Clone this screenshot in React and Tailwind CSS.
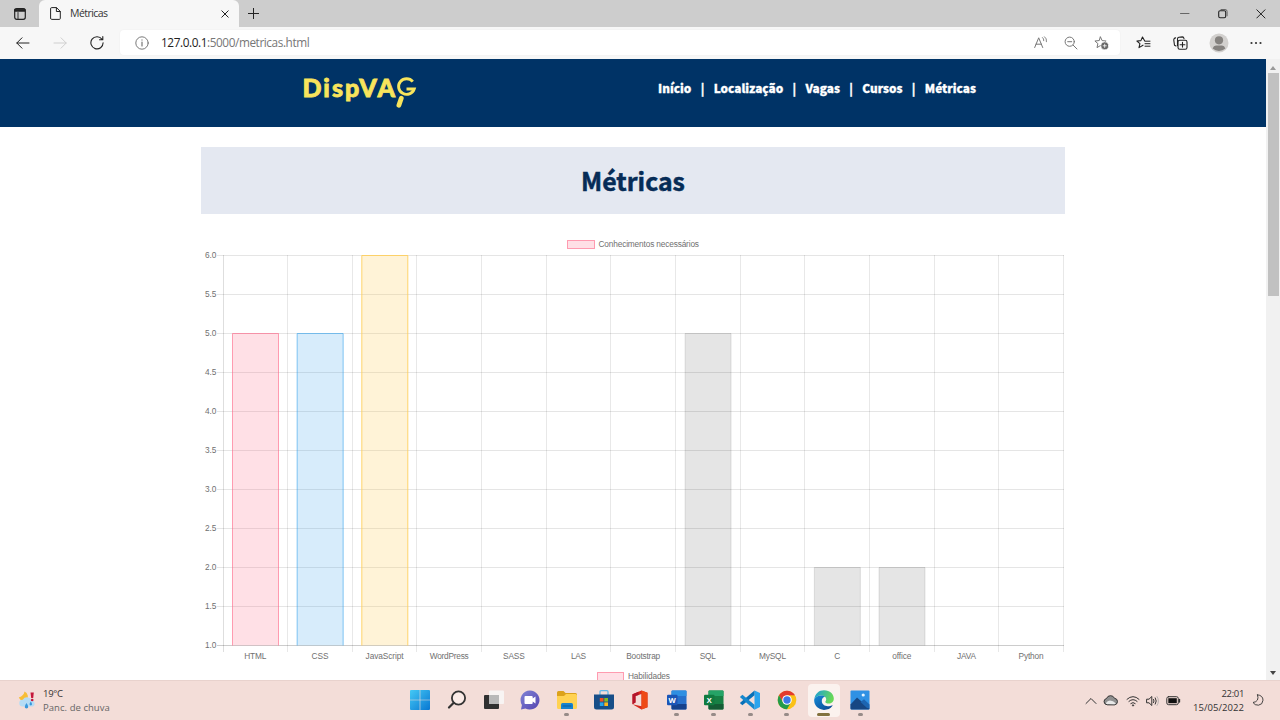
import React from 'react';

const UI = "font-['Open_Sans',sans-serif]";
const SOURCE = "font-['Noto_Sans_CJK_JP','Noto_Sans_CJK_SC',sans-serif]";

function Icon({ w = 16, h = 16, box, className = '', children }) {
  return (
    <svg width={w} height={h} viewBox={box || `0 0 ${w} ${h}`} fill="none" stroke="currentColor" strokeLinecap="round" strokeLinejoin="round" className={`block shrink-0 ${className}`}>
      {children}
    </svg>
  );
}

function TabBar() {
  return (
    <div className="flex h-[27px] shrink-0 bg-[#cdcdcd] text-[#222]">
      <div className="flex w-[39px] items-center justify-center rounded-br-md pt-px">
        <Icon w={12} h={12}>
          <rect x="0.7" y="0.7" width="10.6" height="10.6" rx="2" strokeWidth="1.2" />
          <path d="M1 1.2h10v2H1z" fill="#222" strokeWidth="1" />
          <path d="M4 4.5v6.5" strokeWidth="0.9" />
        </Icon>
      </div>
      <div className="flex w-[200px] items-center rounded-t-md bg-[#f7f7f7] pl-[11px] pr-[10px]">
        <Icon w={11} h={13}>
          <path d="M0.6 1.5a.9.9 0 0 1 .9-.9H6.5l3.8 3.8v7a1 1 0 0 1-1 1H1.6a1 1 0 0 1-1-1zM6.4.8v3.7h3.7" strokeWidth="1" />
        </Icon>
        <span className={`${UI} ml-[9px] text-[10.5px] tracking-[-0.55px] text-[#333]`}>Métricas</span>
        <Icon w={8} h={8} className="ml-auto mt-px">
          <path d="M.8.8l6.4 6.4M7.2.8L.8 7.2" strokeWidth="1" />
        </Icon>
      </div>
      <div className="flex items-center pl-[9px]">
        <Icon w={11} h={11}><path d="M5.500 0v11M0 5.500h11" strokeWidth="1" /></Icon>
      </div>
      <div className="ml-auto flex items-center gap-[28px] pr-[14px]">
        <Icon w={10} h={10}><path d="M.5 4.500h8.5" stroke="#666" strokeWidth="1" /></Icon>
        <Icon w={10} h={10}>
          <rect x=".7" y="1.700" width="7" height="7" rx="1.4" strokeWidth="1.1" />
          <path d="M3 .5h4A2 2 0 0 1 9.100 2.600v4.200" stroke="#666" strokeWidth="1" />
        </Icon>
        <Icon w={10} h={10}><path d="M.8.8l8.2 8.2M9 .8L.8 9" strokeWidth="1" /></Icon>
      </div>
    </div>
  );
}

const STAR = 'M6.5 1l1.6 3.6 4 .4-3 2.6.9 4-3.5-2.1L3 11.600l.9-4-3-2.600 4-.4z';

function Toolbar() {
  return (
    <div className="flex h-8 shrink-0 items-center bg-[#f7f7f7] pb-px text-[#222]">
      <div className="flex w-[120px] items-center gap-[23px] pl-[16px]">
        <Icon w={14} h={12}><path d="M13 6H.8M6 .8L.8 6 6 11.200" strokeWidth="1" /></Icon>
        <Icon w={14} h={12} className="text-[#cfcfcf]"><path d="M1 6h12.200M8 .8L13.200 6 8 11.200" strokeWidth="1" /></Icon>
        <Icon w={14} h={14}>
          <path d="M12 3.300A6.100 6.100 0 1 0 13.100 6.700M12.800.6v3.200H9.500" strokeWidth="1.1" />
        </Icon>
      </div>
      <div className="flex h-[25px] w-[1000px] items-center rounded bg-white pl-[15px] pr-[11px] shadow-[0_0_2px_rgba(0,0,0,0.06)]">
        <Icon w={14} h={14} className="text-[#6b6b6b]">
          <circle cx="7" cy="7" r="6.200" strokeWidth="0.9" />
          <path d="M7 6v4M7 3.900v.2" strokeWidth="1.1" />
        </Icon>
        <span className={`${UI} ml-[12px] text-[11.8px] tracking-[-0.42px] text-[#222]`}>
          127.0.0.1<span className="text-[#777]">:5000/metricas.html</span>
        </span>
        <div className="ml-auto flex items-center gap-[16px] text-[#777]">
          <Icon w={14} h={13}>
            <path d="M.7 11.500L4.700 1.800l4 9.700M2 8.200h5.500" strokeWidth="1" />
            <path d="M8.500 1.500q1.600 1.200 1.300 3.200M10.500.7q2.600 1.800 2 5" strokeWidth="0.9" />
          </Icon>
          <Icon w={14} h={14}>
            <circle cx="5.700" cy="5.700" r="4.600" strokeWidth="1" />
            <path d="M9.200 9.200l3.800 3.800M3.700 5.700h4" strokeWidth="1" />
          </Icon>
          <Icon w={15} h={14}>
            <path d={STAR} strokeWidth="1" />
            <circle cx="10.700" cy="9.800" r="3.900" fill="#666" stroke="#fff" strokeWidth="0.6" />
            <path d="M10.700 8.200v3.200M9.100 9.800h3.200" stroke="#fff" strokeWidth="0.8" />
          </Icon>
        </div>
      </div>
      <div className="flex flex-1 items-center pl-[16px]">
        <Icon w={15} h={14}>
          <path d="M8.600 4.700L6.500 1 4.900 4.600l-4 .4 3 2.600-.9 4 4-2.400" strokeWidth="1.1" />
          <path d="M9 5.200h5M9 7.700h5M9 10.200h5" strokeWidth="1" />
        </Icon>
        <Icon w={15} h={14} className="ml-[22px]">
          <path d="M3 10L1.500 9.300.8 4.200a2 2 0 0 1 1.800-2.300M4.500 9.500V3a1.700 1.700 0 0 1 1.300-1.800L9.500.9c1 0 1.300.8 1.500 1.800" strokeWidth="1.1" />
          <rect x="5" y="4.200" width="9" height="9" rx="1.800" fill="#f7f7f7" strokeWidth="1.1" />
          <path d="M9.500 6.300v4.800M7.100 8.700h4.800" strokeWidth="1.1" />
        </Icon>
        <Icon w={20} h={20} className="ml-[21px]">
          <circle cx="10" cy="10" r="9.500" fill="#d2d0ce" stroke="none" />
          <circle cx="10" cy="7.300" r="4.100" fill="#85827f" stroke="none" />
          <path d="M3.600 15.500q1-3 3.400-3h6q2.400 0 3.400 3a9.500 9.500 0 0 1-12.800 0" fill="#85827f" stroke="none" />
        </Icon>
        <Icon w={12} h={4} className="ml-[21px] text-[#333]">
          <g fill="currentColor" stroke="none"><circle cx="1.500" cy="2" r="1.100" /><circle cx="6" cy="2" r="1.100" /><circle cx="10.500" cy="2" r="1.100" /></g>
        </Icon>
      </div>
    </div>
  );
}

function Logo() {
  return (
    <svg width="120" height="44" viewBox="0 0 120 44" className="block">
      <text x="0.500" y="29.700" fill="#f8e45c" stroke="#f8e45c" strokeWidth="0.800" fontFamily="Lato, sans-serif" fontWeight="900" fontSize="25" textLength="92.500" lengthAdjust="spacing">DispVA</text>
      <path d="M110.800 14.600A8 7.800 0 1 0 112.200 22H104.500" fill="none" stroke="#f8e45c" strokeWidth="2.900" />
      <path d="M99.300 31.200L96.900 38.300" stroke="#f8e45c" strokeWidth="4.800" strokeLinecap="round" />
    </svg>
  );
}

function SiteHeader() {
  return (
    <header className="flex h-[68px] shrink-0 bg-[#003366]">
      <div className="w-[658px] pl-[302px] pt-[8px]"><Logo /></div>
      <nav className={`${SOURCE} flex h-[57px] w-[318px] items-center justify-between whitespace-nowrap text-[11.800px] font-black leading-none text-white [-webkit-text-stroke:0.3px_#fff]`}>
        <span>Início</span><span>|</span><span>Localização</span><span>|</span><span>Vagas</span><span>|</span><span>Cursos</span><span>|</span><span>Métricas</span>
      </nav>
    </header>
  );
}

const LABELS = ['HTML', 'CSS', 'JavaScript', 'WordPress', 'SASS', 'LAS', 'Bootstrap', 'SQL', 'MySQL', 'C', 'office', 'JAVA', 'Python'];
const WIDTHS = [22, 17, 38, 39, 22, 15, 34, 16, 27, 6, 19, 19, 25];
const VALUES = [5, 5, 6, 1, 1, 1, 1, 5, 1, 2, 2, 1, 1];
const COLORS = ['255,99,132', '54,162,235', '255,206,86'];
const STEP = 64.65;
const TOP = 255.5;
const BOTTOM = 645.5;
const yFor = (v) => BOTTOM - ((v - 1) * (BOTTOM - TOP)) / 5;

function Chart() {
  const ticks = Array.from({ length: 11 }, (_, i) => 6 - i * 0.5);
  return (
    <svg width="864" height="452" viewBox="201 228 864 452" className="block" fontFamily="'Liberation Sans', Arial, sans-serif" fontSize="8.300" fill="#707070">
      <rect x="567.500" y="240.500" width="27" height="8" fill="rgba(255,99,132,.2)" stroke="rgba(255,99,132,.6)" />
      <text x="598.500" y="247.200" textLength="100.500">Conhecimentos necessários</text>
      {ticks.map((v, i) => {
        const y = Math.floor(yFor(v)) + 0.5;
        return (
          <g key={v}>
            <path d={`M217 ${y}H1064`} stroke={i === 10 ? 'rgba(0,0,0,.2)' : 'rgba(0,0,0,.1)'} />
            <text x="216.500" y={y + 2.400} textAnchor="end">{v.toFixed(1)}</text>
          </g>
        );
      })}
      {Array.from({ length: 14 }, (_, i) => {
        const x = Math.floor(223 + i * STEP) + 0.5;
        return <path key={i} d={`M${x} 255V652`} stroke={i === 0 ? 'rgba(0,0,0,.13)' : 'rgba(0,0,0,.09)'} />;
      })}
      {LABELS.map((label, i) => {
        const c = COLORS[i];
        const x = 232.5 + i * STEP;
        const y = yFor(VALUES[i]);
        return (
          <g key={label}>
            {VALUES[i] > 1 && (
              <>
                <rect x={x} y={y} width="46" height={BOTTOM - y} fill={c ? `rgba(${c},${i === 2 ? 0.24 : 0.2})` : 'rgba(0,0,0,.1)'} />
                <path d={`M${x} ${BOTTOM}V${y}h46V${BOTTOM}`} fill="none" stroke={c ? `rgba(${c},${i === 2 ? 0.85 : 0.6})` : 'rgba(0,0,0,.1)'} />
              </>
            )}
            <text x={255.3 + i * STEP} y="659.300" textAnchor="middle" textLength={WIDTHS[i]}>{label}</text>
          </g>
        );
      })}
      <rect x="597.500" y="672.500" width="26" height="8" fill="rgba(255,99,132,.2)" stroke="rgba(255,99,132,.6)" />
      <text x="628" y="679.200" textLength="42">Habilidades</text>
    </svg>
  );
}

function Scrollbar() {
  return (
    <div className="flex w-[14px] shrink-0 flex-col items-center bg-[#f1f1f1]">
      <div className="flex h-[14px] items-center pt-[3px]"><Icon w={6} h={4}><path d="M0 4L3 0l3 4z" fill="#999" stroke="none" /></Icon></div>
      <div className="h-[223px] w-[11px] bg-[#c1c1c1]" />
      <div className="mt-auto flex h-[14px] items-center"><Icon w={6} h={4}><path d="M0 0l3 4 3-4z" fill="#444" stroke="none" /></Icon></div>
    </div>
  );
}

function Office({ letter, dark, mid, light, box }) {
  return (
    <Icon w={20} h={20}>
      <g stroke="none">
        <rect x="4.500" y=".5" width="15" height="19" rx="1" fill={mid} />
        <path d="M5.500.5h13a1 1 0 0 1 1 1V6h-15V1.500a1 1 0 0 1 1-1z" fill={light} />
        <path d="M4.500 14h15v4.500a1 1 0 0 1-1 1h-13a1 1 0 0 1-1-1z" fill={dark} />
        <rect x="0" y="4.800" width="10.500" height="10.500" rx="1" fill={box} />
        <text x="5.200" y="12.800" fontSize="7.500" fontWeight="700" fontFamily="'Open Sans', sans-serif" textAnchor="middle" fill="#fff">{letter}</text>
      </g>
    </Icon>
  );
}

const APPS = [
  ['start', <Icon w={20} h={20}><defs><linearGradient id="win" gradientUnits="userSpaceOnUse" x1="0" y1="0" x2="20" y2="20"><stop stopColor="#45c9f5" /><stop offset="1" stopColor="#0877d2" /></linearGradient></defs><path d="M1 0h8.700v9.700H0V1q0-1 1-1M10.300 0H19q1 0 1 1v8.700h-9.700zM0 10.300h9.700V20H1q-1 0-1-1zM10.300 10.300H20V19q0 1-1 1h-8.700z" fill="url(#win)" stroke="none" /></Icon>],
  ['search', <Icon w={20} h={20}><circle cx="11.500" cy="8" r="6.600" strokeWidth="1.800" fill="#faebe7" /><path d="M6.700 12.800L2 17.500" strokeWidth="2.200" /></Icon>],
  ['tasks', <Icon w={20} h={20}><g stroke="none"><rect x="0" y="5" width="15" height="14" rx="1" fill="#303030" /><rect x="5" y=".5" width="15" height="13.500" rx="1" fill="#f8f8f8" opacity=".85" /><path d="M5 5h10v9H5z" fill="#b9b9b9" /></g></Icon>],
  ['chat', <Icon w={20} h={20}><defs><linearGradient id="chat" x2="1" y2="1"><stop stopColor="#8184d5" /><stop offset="1" stopColor="#5344b0" /></linearGradient></defs><path d="M10 .4a9.600 9.600 0 1 1-4.600 18.100L1 19.500l.9-4.600A9.600 9.600 0 0 1 10 .4" fill="url(#chat)" stroke="none" /><path d="M5.500 6h6.200q1 0 1 1v1.500L15.500 6.600v6.800l-2.800-1.800V13q0 1-1 1H5.500q-1 0-1-1V7q0-1 1-1" fill="#fff" stroke="none" /></Icon>],
  ['files', <Icon w={20} h={20}><g stroke="none"><path d="M1.500 1h5l2 2H18.500q1.500 0 1.500 1.500V9H0V2.500Q0 1 1.500 1" fill="#dca21b" /><path d="M0 6h7l2-2h9.500Q20 4 20 5.500v12q0 1.500-1.500 1.500h-17Q0 19 0 17.500z" fill="#ffd252" /><path d="M4 19v-4.500q0-1.500 1.500-1.500h9q1.500 0 1.500 1.500V19z" fill="#1683cf" /><path d="M6 16h8" stroke="#0b5a9b" /></g></Icon>],
  ['store', <Icon w={20} h={20}><path d="M6 5V1.800Q6 .7 7 .7h6q1 0 1 1.100V5" stroke="#65b9e8" strokeWidth="1.300" /><path d="M0 4.500h20V17q0 2.500-2.500 2.500h-15Q0 19.500 0 17z" fill="#174e88" stroke="none" /><g stroke="none"><path d="M5.800 8h3.700v3.600H5.800z" fill="#f05024" /><path d="M10.300 8H14v3.600h-3.700z" fill="#80ba25" /><path d="M5.800 12.400h3.700V16H5.800z" fill="#26a5ec" /><path d="M10.300 12.400H14V16h-3.700z" fill="#fcb71c" /></g></Icon>],
  ['office', <Icon w={20} h={20}><g stroke="none"><path d="M11.500.5L2.500 4.300v10l3-1.800V6l6-2V16.300l-9-2 9 5.200 6-2.200V2.700z" fill="#d42a1e" /><path d="M11.500.5l6 2.200v14.600l-6 2.200z" fill="#ee4a16" /><path d="M2.500 4.300v10l3-1.800V6l3-1V1.800z" fill="#b3142c" /></g></Icon>],
  ['word', <Office letter="W" light="#2f8fe2" mid="#2770cc" dark="#15418c" box="#1b55b6" />],
  ['excel', <Office letter="X" light="#25a366" mid="#178044" dark="#155c35" box="#107b40" />],
  ['code', <Icon w={20} h={20}><g stroke="none"><path d="M14.500.4L20 3v14l-5.500 2.700z" fill="#2ba4ee" /><path d="M14.500.4v4.800L2.400 15.300.4 13.600q-.6-.6 0-1.200z" fill="#0870b8" /><path d="M14.500 19.700v-5L2.400 4.700.4 6.400q-.6.6 0 1.200z" fill="#1587cd" /></g></Icon>],
  ['chrome', <Icon w={20} h={20}><g stroke="none"><circle cx="10" cy="10" r="9.300" fill="#fbc116" /><path d="M1.950 5.350A9.300 9.300 0 0 1 18.050 5.350H10L6 12.300z" fill="#e33b2e" /><path d="M1.950 5.350A9.300 9.300 0 0 0 10 19.300l4-7-8 0z" fill="#229b4b" /><circle cx="10" cy="10" r="4.800" fill="#fff" /><circle cx="10" cy="10" r="3.700" fill="#3b78e7" /></g></Icon>],
  ['edge', <Icon w={20} h={20}><defs><linearGradient id="edgeTop" x2="1" y2=".3"><stop stopColor="#199ddd" /><stop offset="1" stopColor="#67d957" /></linearGradient><linearGradient id="edgeLow" x2="1" y2="1"><stop stopColor="#168cd9" /><stop offset="1" stopColor="#0b438d" /></linearGradient></defs><g stroke="none"><path d="M.2 9.500C1 3.500 5 .2 10 .2c6 0 9.800 4 9.800 8.300 0 3.200-2.300 5-5 5-2.400 0-3.500-.9-3.500-1.600 0-.6.9-1 .9-2.600 0-2-2-3.800-5-3.800-3.400 0-6 2-7 4z" fill="url(#edgeTop)" /><path d="M.2 9.500C1.500 6.700 4 5.500 7.200 5.500c1.500 0 3 .5 3.800 1.300C8.800 7.200 7.800 9 7.800 11c0 3.300 2.900 5.200 6 5.200 1.800 0 3-.3 4-.8.500-.3.900.2.5.7C16.500 18.700 13.600 19.900 10 19.900 4 19.900-.3 15 .2 9.500" fill="url(#edgeLow)" /></g></Icon>],
  ['photos', <Icon w={20} h={20}><g stroke="none"><rect x=".5" y=".5" width="19" height="19" rx="1" fill="#2f91e4" /><path d="M.5 14.500L7 7.500l12.500 11q0 1-1 1h-17q-1 0-1-1z" fill="#174783" /><path d="M10.500 12l3.500-2.700 5.500 5.200v4L17 18z" fill="#1d65b1" /><circle cx="13.200" cy="5" r="1.600" fill="#e5f4ff" /></g></Icon>],
];

const OPEN = ['files', 'word', 'excel', 'code', 'chrome', 'photos'];

function Taskbar() {
  return (
    <footer className={`${UI} flex h-10 shrink-0 border-t border-[#e8d2cd] bg-[#f3ddd8] text-[#333]`}>
      <div className="flex w-[402px] items-center pl-[18px]">
        <Icon w={19} h={19}>
          <g stroke="none">
            <path d="M6.500.5Q6 4.500.8 6.500a6 6 0 0 0 8 3A6 6 0 0 0 6.500.5" fill="#f7bd36" />
            <path d="M4.500 15.500a3.400 3.400 0 0 1 .3-6.800 4.800 4.800 0 0 1 8.700.8 3.200 3.200 0 0 1 1.500 6z" fill="#b5dcf5" />
            <path d="M8.500 12q-3.500 5 0 5.500 3.500-.5 0-5.500M12.800 10.500q-2.500 3.500 0 4 2.500-.5 0-4" fill="#3a98dc" />
            <path d="M12.500 1.500h3.300L15.200 7h-2z" fill="#c5173b" /><circle cx="14.200" cy="9" r="1.300" fill="#c5173b" />
          </g>
        </Icon>
        <div className="ml-[6px] flex flex-col text-[9.500px] leading-[13.500px]">
          <span className="tracking-[-0.3px]">19°C</span>
          <span className="tracking-[0.05px] text-[#666]">Panc. de chuva</span>
        </div>
      </div>
      <div className="flex">
        {APPS.map(([name, icon]) => (
          <div key={name} className="flex w-[36.670px] justify-center pt-[3px]">
            <div className={`flex h-[33px] w-[32px] flex-col items-center rounded pt-[6px] ${name === 'edge' ? 'bg-[#fbf2ee]' : ''}`}>
              {icon}
              {OPEN.includes(name) && <div className="mt-[3px] h-[3px] w-[5px] rounded-full bg-[#968b88]" />}
              {name === 'edge' && <div className="mt-[3px] h-[3px] w-[13px] rounded-full bg-[#82713e]" />}
            </div>
          </div>
        ))}
      </div>
      <div className="ml-auto flex items-center pr-[16px]">
        <Icon w={12} h={8}><path d="M1 6.500L6 1.500l5 5" strokeWidth="1" /></Icon>
        <Icon w={15} h={11} className="ml-[6px]"><path d="M4 9.800a3.200 3.200 0 0 1-.5-6.300 4.300 4.300 0 0 1 8-.2 3.300 3.300 0 0 1 .4 6.500z" fill="#8f8f8f" strokeWidth="1" /><path d="M3 9q0-3 4-3.500 3 0 6 3L11 9.300z" fill="#e8e8e8" stroke="none" /></Icon>
        <Icon w={14} h={12} className="ml-[8px]"><path d="M1 4.300q6-5.500 12 0M2.900 6.400q4.100-3.700 8.200 0M4.800 8.500q2.200-2 4.400 0" strokeWidth="1" /><circle cx="7" cy="10.400" r=".8" fill="currentColor" strokeWidth=".3" /></Icon>
        <Icon w={13} h={12} className="ml-[6px]"><path d="M1 4.200h2L5.800 1.500v9L3 7.800H1zM7.600 4.400q1 1.600 0 3.200M9.300 2.900q2 3.100 0 6.200" strokeWidth="1" /><path d="M11 1.500q3 4.500 0 9" stroke="#aaa" strokeWidth=".8" /></Icon>
        <Icon w={15} h={10} className="ml-[7px]"><rect x=".8" y=".7" width="11.500" height="8" rx="1.800" strokeWidth="1" /><rect x="2.300" y="2.200" width="8.500" height="5" fill="#111" stroke="none" /><path d="M13.500 3.500v2.500" strokeWidth="1.300" /></Icon>
        <div className="ml-[11px] flex w-[52px] flex-col items-end whitespace-nowrap text-[9.500px] leading-[13.200px]">
          <span className="tracking-[-0.35px]">22:01</span><span className="tracking-[0.05px]">15/05/2022</span>
        </div>
        <Icon w={12} h={12} className="ml-[8px] -mt-px"><path d="M5.500.8q5.500.6 5.500 5.400-.3 4.500-4.500 5-3.800.2-5.500-2.700Q7.700 7.600 5.500.8" strokeWidth=".9" /></Icon>
      </div>
    </footer>
  );
}

export default function App() {
  return (
    <div className="flex h-[720px] w-[1280px] flex-col overflow-hidden bg-white">
      <TabBar />
      <Toolbar />
      <div className="flex min-h-0 flex-1">
        <main className="flex w-[1266px] flex-col overflow-hidden">
          <SiteHeader />
          <section className="mt-[20px] flex w-[864px] shrink-0 flex-col self-center">
            <h1 className={`${SOURCE} flex h-[67px] items-center justify-center bg-[#e4e8f1] pb-px text-[24.800px] font-bold leading-none text-[#062c57] [-webkit-text-stroke:0.5px_#062c57]`}>Métricas</h1>
            <div className="mt-[14px]"><Chart /></div>
          </section>
        </main>
        <Scrollbar />
      </div>
      <Taskbar />
    </div>
  );
}
